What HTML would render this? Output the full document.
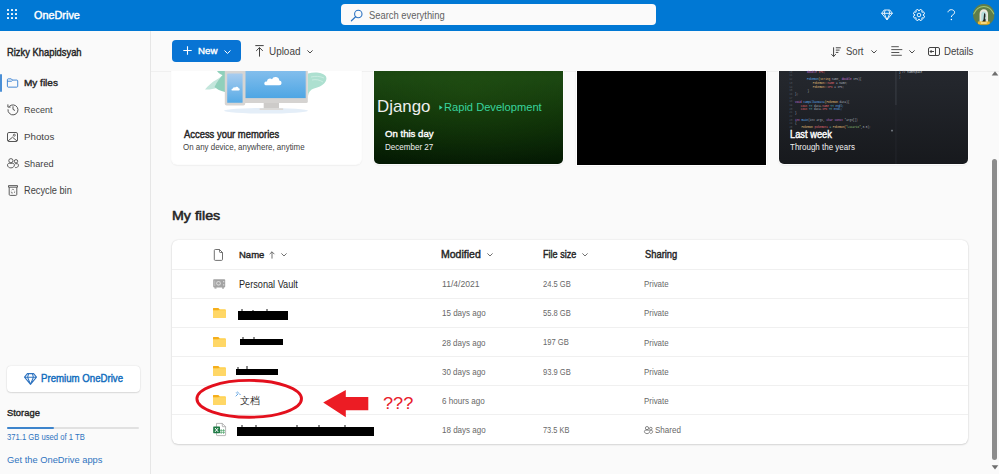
<!DOCTYPE html>
<html><head><meta charset="utf-8">
<style>
*{box-sizing:border-box;margin:0;padding:0}
html,body{width:999px;height:474px;overflow:hidden;background:#fafafa;font-family:"Liberation Sans",sans-serif;color:#242424;position:relative}
.t{position:absolute;white-space:nowrap;line-height:1;transform-origin:0 0}
.ab{position:absolute}
svg{position:absolute;overflow:visible}
#hdr{position:absolute;left:0;top:0;width:999px;height:31px;background:#0078d4}
.dot{position:absolute;width:2px;height:2px;background:#fff;border-radius:.4px}
#search{position:absolute;left:341px;top:4px;width:315px;height:21px;background:#fafafa;border-radius:4px}
#side{position:absolute;left:0;top:31px;width:151px;height:443px;background:#fafafa;border-right:1px solid #e6e6e6}
#content{position:absolute;left:151px;top:71px;width:848px;height:403px;overflow:hidden}
.card{position:absolute;border-radius:5px;overflow:hidden;box-shadow:0 0 0 1px rgba(255,255,255,.9),0 0 2px rgba(0,0,0,.14),0 1px 2px rgba(0,0,0,.12)}
.hr{position:absolute;left:0;width:796px;height:1px;background:#f0f0f0}
.bar{position:absolute;height:9px;background:#000}
</style></head><body>
<!-- header -->
<div id="hdr">
  <div class="dot" style="left:7.2px;top:9.3px"></div><div class="dot" style="left:11.2px;top:9.3px"></div><div class="dot" style="left:15.2px;top:9.3px"></div>
  <div class="dot" style="left:7.2px;top:13.3px"></div><div class="dot" style="left:11.2px;top:13.3px"></div><div class="dot" style="left:15.2px;top:13.3px"></div>
  <div class="dot" style="left:7.2px;top:17.3px"></div><div class="dot" style="left:11.2px;top:17.3px"></div><div class="dot" style="left:15.2px;top:17.3px"></div>
  <div id="search"></div>
  <!-- search icon -->
  <svg style="left:350px;top:9px" width="14" height="13" viewBox="0 0 14 13"><circle cx="8.3" cy="5" r="3.7" fill="none" stroke="#2b72c2" stroke-width="1.1"/><line x1="5.6" y1="7.7" x2="1.4" y2="11.8" stroke="#2b72c2" stroke-width="1.2" stroke-linecap="round"/></svg>
  <!-- diamond -->
  <svg style="left:881px;top:9px" width="12" height="12" viewBox="0 0 12 12"><path d="M3.2 1h5.6l2.6 3.3L6 10.8 0.6 4.3z M0.6 4.3h10.8 M4.2 1.2L3.2 4.3 6 10.8 8.8 4.3 7.8 1.2" fill="none" stroke="#fff" stroke-width=".9" stroke-linejoin="round"/></svg>
  <!-- gear -->
  <svg style="left:913.3px;top:9px" width="12" height="12" viewBox="0 0 12 12"><path d="M10.00 6.13 L11.59 7.09 L10.73 9.18 L8.92 8.73 L8.73 8.92 L9.18 10.73 L7.09 11.59 L6.13 10.00 L5.87 10.00 L4.91 11.59 L2.82 10.73 L3.27 8.92 L3.08 8.73 L1.27 9.18 L0.41 7.09 L2.00 6.13 L2.00 5.87 L0.41 4.91 L1.27 2.82 L3.08 3.27 L3.27 3.08 L2.82 1.27 L4.91 0.41 L5.87 2.00 L6.13 2.00 L7.09 0.41 L9.18 1.27 L8.73 3.08 L8.92 3.27 L10.73 2.82 L11.59 4.91 L10.00 5.87Z" fill="none" stroke="#fff" stroke-width=".9" stroke-linejoin="round"/><circle cx="6" cy="6" r="1.8" fill="none" stroke="#fff" stroke-width=".9"/></svg>
  <!-- help -->
  <svg style="left:947px;top:9px" width="9" height="12" viewBox="0 0 9 12"><path d="M1 3.3C1 1.8 2.6.7 4.3.7S7.6 1.8 7.6 3.3c0 1.6-1.3 2.2-2.3 2.9-.7.5-.9 1-.9 1.9" fill="none" stroke="#fff" stroke-width="1"/><circle cx="4.4" cy="10.6" r=".75" fill="#fff"/></svg>
  <!-- avatar -->
  <svg style="left:973px;top:3.8px" width="21.6" height="21.6" viewBox="0 0 22 22"><defs><clipPath id="av"><circle cx="11" cy="11" r="11"/></clipPath></defs><g clip-path="url(#av)"><rect width="22" height="22" fill="#5f7d49"/><path d="M.5 10.5C2 8 3 6 5 4.5 7 3 9 2.5 11 2.5s4 .5 6 2c2 1.5 3 3.5 4.5 6" fill="none" stroke="#a3c770" stroke-width="1.1"/><path d="M6.7 20V10.2C6.7 7.4 8.6 5.4 11 5.4s4.3 2 4.3 4.8V20z" fill="#ece8de"/><path d="M8.4 19.5V10.6c0-1.7 1.1-3 2.6-3s2.6 1.3 2.6 3v8.9z" fill="#b5dcdc"/><path d="M11.3 9.5c.8 0 1.3.6 1.3 1.5v2c0 .6-.3.9-.7 1.2l.9 1.4v3.4h-3.2v-1.6c.6-.4 1.2-1.2 1.2-2.3z" fill="#222"/><rect x="5" y="17.8" width="12" height="3.2" fill="#efb52f"/><rect x="8" y="18.8" width="6" height="1.1" fill="#fff3c0"/></g></svg>
</div>

<!-- sidebar -->
<div id="side"></div>
<div class="ab" style="left:0;top:73.6px;width:1.6px;height:18px;background:#4a8fd6;border-radius:1px"></div>
<!-- folder icon (my files) -->
<svg style="left:7px;top:77.8px" width="11.3" height="10" viewBox="0 0 12 10.4"><path d="M1.3 .8h3.2l1.2 1.3h4.8c.5 0 .9.4.9.9v5.7c0 .5-.4.9-.9.9H1.3C.8 9.6.4 9.2.4 8.7V1.7c0-.5.4-.9.9-.9z M.4 3.3h4.3l1.3-1.2" fill="none" stroke="#2f7bd0" stroke-width=".95" stroke-linejoin="round"/></svg>
<!-- recent icon -->
<svg style="left:7px;top:102.6px" width="12" height="12" viewBox="0 0 12 12"><path d="M2.2 3.6A5 5 0 1 1 1 6.3" fill="none" stroke="#555" stroke-width="1"/><path d="M.9 1.4v2.7h2.7" fill="none" stroke="#555" stroke-width="1"/><path d="M6 3.3v3.1l2 1.1" fill="none" stroke="#555" stroke-width="1"/></svg>
<!-- photos icon -->
<svg style="left:7px;top:132px" width="11" height="10" viewBox="0 0 11 10"><rect x=".5" y=".5" width="10" height="9" rx="1.4" fill="none" stroke="#555" stroke-width="1"/><path d="M1 9L5.5 5.2 10 9" fill="none" stroke="#555" stroke-width="1"/><circle cx="7.3" cy="3.2" r="1" fill="none" stroke="#555" stroke-width=".9"/></svg>
<!-- shared icon -->
<svg style="left:7px;top:158px" width="12" height="11" viewBox="0 0 12 11"><circle cx="3.9" cy="2.7" r="2.1" fill="none" stroke="#555" stroke-width=".95"/><circle cx="9" cy="3.3" r="1.7" fill="none" stroke="#555" stroke-width=".95"/><path d="M.5 7c0-1.1.8-1.7 1.8-1.7h3.3c1 0 1.8.6 1.8 1.7 0 1.8-1.7 2.9-3.5 2.9S.5 8.8.5 7z" fill="none" stroke="#555" stroke-width=".95"/><path d="M8.2 9.6c1.9.2 3.3-.9 3.3-2.4 0-.9-.6-1.5-1.5-1.5H8.2" fill="none" stroke="#555" stroke-width=".95"/></svg>
<!-- recycle icon -->
<svg style="left:8px;top:185px" width="10" height="11" viewBox="0 0 10 11"><path d="M.5 .6h9v1.6h-9z M1.2 2.2v7.2c0 .6.4 1 1 1h5.6c.6 0 1-.4 1-1V2.2" fill="none" stroke="#555" stroke-width=".95" stroke-linejoin="round"/><path d="M3.6 5.1l1.3-1 1.3 1 M3.2 6.6l.4 1.5 1.4-.2 M6.7 6.4l-.3 1.6" fill="none" stroke="#666" stroke-width=".7"/></svg>

<!-- premium button -->
<div class="ab" style="left:6.7px;top:365.8px;width:133px;height:26.2px;background:#fff;border-radius:4px;box-shadow:0 0 1.5px rgba(0,0,0,.16),0 1px 1.5px rgba(0,0,0,.1)"></div>
<svg style="left:23.5px;top:373px" width="13" height="12" viewBox="0 0 13 12"><path d="M3.4 .6h6.2l2.9 3.6L6.5 11.4 .5 4.2z M.5 4.2h12 M4.6 .8L3.6 4.2l2.9 7.2 2.9-7.2-1-3.4" fill="none" stroke="#2f74c0" stroke-width="1.05" stroke-linejoin="round"/></svg>
<div class="ab" style="left:7.2px;top:427.4px;width:132px;height:1.8px;background:#e1e1e1;border-radius:1px"></div>
<div class="ab" style="left:7.2px;top:427.3px;width:47.2px;height:2px;background:#3d84cc;border-radius:1px"></div>

<!-- toolbar -->
<div class="ab" style="left:172.2px;top:40px;width:69px;height:22px;background:#0874d4;border-radius:4px"></div>
<svg style="left:182.5px;top:46.4px" width="9" height="9" viewBox="0 0 9 9"><path d="M4.5 .3v8.4M.3 4.5h8.4" stroke="#fff" stroke-width="1.1"/></svg>
<svg style="left:223.5px;top:49.5px" width="7" height="4" viewBox="0 0 7 4"><path d="M.5.5l3 3 3-3" fill="none" stroke="#fff" stroke-width="1"/></svg>
<svg style="left:254.5px;top:45px" width="9" height="12" viewBox="0 0 9 12"><path d="M.3.6h8.4 M4.5 11.6V2.6 M1.2 5.9l3.3-3.3 3.3 3.3" fill="none" stroke="#424242" stroke-width="1"/></svg>
<svg style="left:306.5px;top:50px" width="6" height="4" viewBox="0 0 6 4"><path d="M.4.4l2.6 2.6L5.6.4" fill="none" stroke="#424242" stroke-width=".95"/></svg>
<!-- sort -->
<svg style="left:831px;top:46.5px" width="10" height="10" viewBox="0 0 10 10"><path d="M2.6 .3v9.2 M.4 7.2l2.2 2.3 2.2-2.3 M4.8.8h5 M4.8 3.1h3.8 M4.8 5.4h2.6" fill="none" stroke="#424242" stroke-width="1"/></svg>
<svg style="left:871px;top:50px" width="6" height="4" viewBox="0 0 6 4"><path d="M.4.4l2.6 2.6L5.6.4" fill="none" stroke="#424242" stroke-width=".95"/></svg>
<!-- view -->
<svg style="left:890.5px;top:46px" width="12" height="10" viewBox="0 0 12 10"><path d="M.3 .7h7.5 M.3 3.6h11 M.3 6.5h8 M.3 9.3h10.5" fill="none" stroke="#555" stroke-width="1"/></svg>
<svg style="left:908.5px;top:50px" width="6" height="4" viewBox="0 0 6 4"><path d="M.4.4l2.6 2.6L5.6.4" fill="none" stroke="#424242" stroke-width=".95"/></svg>
<!-- details -->
<svg style="left:928px;top:47px" width="12" height="9" viewBox="0 0 12 9"><rect x=".5" y=".5" width="11" height="8" rx="1.5" fill="none" stroke="#424242" stroke-width="1"/><path d="M7.5.5v8 M2 4.5h4 M3.6 3l-1.5 1.5 1.5 1.5" fill="none" stroke="#424242" stroke-width="1"/></svg>

<!-- content -->
<div id="content">
  <div class="ab" style="left:0;top:0;width:999px;height:1px;background:#f0f0f0"></div>
</div>
<div class="ab" style="left:151px;top:71px;width:848px;height:403px;overflow:hidden">
  <!-- card 1 -->
  <div class="card" style="left:21px;top:-40px;width:188.6px;height:132.5px;background:#fff"></div>
  <!-- card 2 -->
  <div class="card" style="left:223.3px;top:-40px;width:189.1px;height:132.7px;background:radial-gradient(ellipse 80% 60% at 50% 45%,rgba(40,90,20,.35) 0%,rgba(40,90,20,0) 100%),linear-gradient(180deg,#123a0a 0%,#1a4511 35%,#0f3208 62%,#041903 100%)"></div>
  <!-- card 3 -->
  <div class="ab" style="left:425.6px;top:-40px;width:189.2px;height:133.7px;background:#000;box-shadow:0 0 0 1px #fff,0 0 3px rgba(0,0,0,.14)"></div>
  <!-- card 4 -->
  <div class="card" style="left:628px;top:-40px;width:189px;height:132.6px;background:linear-gradient(180deg,#272a31 0%,#23262c 40%,#17191d 100%)"></div>
</div>

<!-- illustration card1 -->
<svg style="left:195px;top:71px" width="140" height="45" viewBox="0 0 140 45">
  <defs>
    <linearGradient id="scr" x1="0" y1="0" x2="0" y2="1"><stop offset="0" stop-color="#8ec3ee"/><stop offset="1" stop-color="#4ea6e4"/></linearGradient>
    <linearGradient id="ph" x1="0" y1="0" x2="0" y2="1"><stop offset="0" stop-color="#a8ccef"/><stop offset="1" stop-color="#55aae6"/></linearGradient>
    <clipPath id="c1"><rect x="-5" y="0" width="150" height="46"/></clipPath>
  </defs>
  <g clip-path="url(#c1)">
  <path d="M10 18.5C13 15 17 11 21 9 25 7 28 4 30 1V13C26 16 18 19 10 18.5z" fill="#c3e6dc"/>
  <path d="M19.5 16C22 11 25 6 30 2V21C25 20 22 18 19.5 16z" fill="#90d0bb"/>
  <path d="M22 0h8v5C27 4 24 3 22 0z" fill="#90d0bb"/>
  <path d="M113 2.5C119 .5 128 1 131 5.5 133 10 128 15.5 119 17.5 115.5 18.5 113.5 21 113 25z" fill="#ade0d0"/>
  <path d="M116 6C120 5 125 5 129 7 M117 9C121 8 125 9 128 11" fill="none" stroke="#d4efe6" stroke-width=".7"/>
  <ellipse cx="71" cy="39.8" rx="42" ry="2.8" fill="#e4eef8"/>
  <rect x="49" y="-6" width="63.8" height="38" rx="1.5" fill="#d5d3d1"/>
  <rect x="50.4" y="-6" width="60.3" height="33.1" fill="url(#scr)"/>
  <path d="M70.5 14.3h13.6a2.4 2.4 0 0 0 .2-4.8 3.8 3.8 0 0 0-7.3-1.2 3 3 0 0 0-5 2.3 1.9 1.9 0 0 0-1.5 3.7z" fill="#fff"/>
  <rect x="68.7" y="32" width="15.3" height="5.6" fill="#cdcbc9"/>
  <rect x="64.5" y="37.3" width="23.8" height="1.6" rx=".6" fill="#dcdad8"/>
  <rect x="29.8" y="-6" width="20.4" height="40.6" rx="1.8" fill="#d7d5d3"/>
  <rect x="32.2" y="2.6" width="15.4" height="29.2" rx=".6" fill="url(#ph)"/>
  <path d="M37.2 19.6h6.3a1.2 1.2 0 0 0 .1-2.4 1.9 1.9 0 0 0-3.5-.6 1.5 1.5 0 0 0-2.4 1.1.95.95 0 0 0-.5 1.9z" fill="#fff"/>
  </g>
</svg>

<!-- code editor lines card4 -->
<svg style="left:779px;top:71px" width="189" height="93" viewBox="0 0 189 93" font-family="Liberation Mono, monospace" font-size="2.75">
<g fill="#5c6370" opacity=".8">
<text x="10.2" y="1.80">10</text>
<text x="10.2" y="5.49">11</text>
<text x="10.2" y="9.18">12</text>
<text x="10.2" y="12.87">13</text>
<text x="10.2" y="16.56">14</text>
<text x="10.2" y="20.25">15</text>
<text x="10.2" y="23.94">16</text>
<text x="10.2" y="27.63">17</text>
<text x="10.2" y="31.32">18</text>
<text x="10.2" y="35.01">19</text>
<text x="10.2" y="38.70">20</text>
<text x="10.2" y="42.39">21</text>
<text x="10.2" y="46.08">22</text>
<text x="10.2" y="49.77">23</text>
<text x="10.2" y="53.46">24</text>
<text x="10.2" y="57.15">25</text>
</g>
<text x="28.00" y="1.80" xml:space="preserve"><tspan fill="#c678dd">double</tspan><tspan fill="#e06c75"> IPK;</tspan></text>
<text x="28.00" y="9.40" xml:space="preserve"><tspan fill="#61afef">Pokemon</tspan><tspan fill="#e5c07b">(string</tspan><tspan fill="#abb2bf"> name, </tspan><tspan fill="#c678dd">double</tspan><tspan fill="#abb2bf"> IPK){</tspan></text>
<text x="33.80" y="13.20" xml:space="preserve"><tspan fill="#e5c07b">Pokemon::</tspan><tspan fill="#e06c75">name</tspan><tspan fill="#abb2bf"> = name;</tspan></text>
<text x="33.80" y="16.70" xml:space="preserve"><tspan fill="#e5c07b">Pokemon::</tspan><tspan fill="#e06c75">IPK</tspan><tspan fill="#abb2bf"> = IPK;</tspan></text>
<text x="28.40" y="20.50" xml:space="preserve"><tspan fill="#abb2bf">}</tspan></text>
<text x="16.00" y="24.30" xml:space="preserve"><tspan fill="#abb2bf">};</tspan></text>
<text x="16.00" y="31.70" xml:space="preserve"><tspan fill="#c678dd">void </tspan><tspan fill="#61afef">tampilkanData</tspan><tspan fill="#e5c07b">(Pokemon</tspan><tspan fill="#abb2bf"> data){</tspan></text>
<text x="21.80" y="35.50" xml:space="preserve"><tspan fill="#e06c75">cout</tspan><tspan fill="#56b6c2"> &lt;&lt; </tspan><tspan fill="#abb2bf">data.</tspan><tspan fill="#e06c75">name</tspan><tspan fill="#56b6c2"> &lt;&lt; </tspan><tspan fill="#61afef">endl;</tspan></text>
<text x="21.80" y="38.90" xml:space="preserve"><tspan fill="#e06c75">cout</tspan><tspan fill="#56b6c2"> &lt;&lt; </tspan><tspan fill="#abb2bf">data.</tspan><tspan fill="#e06c75">IPK</tspan><tspan fill="#56b6c2"> &lt;&lt; </tspan><tspan fill="#61afef">endl;</tspan></text>
<text x="16.00" y="42.60" xml:space="preserve"><tspan fill="#abb2bf">}</tspan></text>
<text x="16.00" y="49.90" xml:space="preserve"><tspan fill="#c678dd">int </tspan><tspan fill="#61afef">main</tspan><tspan fill="#abb2bf">(int argc, </tspan><tspan fill="#c678dd">char const </tspan><tspan fill="#abb2bf">*argv[])</tspan></text>
<text x="16.00" y="53.40" xml:space="preserve"><tspan fill="#abb2bf">{</tspan></text>
<text x="22.40" y="57.00" xml:space="preserve"><tspan fill="#e5c07b">Pokemon </tspan><tspan fill="#e06c75">pokemon1</tspan><tspan fill="#56b6c2"> = </tspan><tspan fill="#e5c07b">Pokemon(</tspan><tspan fill="#98c379">&quot;Lucario&quot;</tspan><tspan fill="#abb2bf">,3.5);</tspan></text>
<text x="120" y="1.6" fill="#c8ccd2" xml:space="preserve">} // namespace</text>
<text x="120" y="7.4" fill="#7a8088">}</text>
<rect x="116.5" y="0" width=".9" height="34" fill="#3e424a"/><rect x="116.5" y="34" width=".9" height="59" fill="#24272d"/><rect x="112" y="58.8" width="2" height="1.6" fill="#6b7078"/>
</svg>

<!-- heading + table -->
<div class="ab" style="left:172px;top:240.4px;width:796px;height:203.3px;background:#fff;border-radius:6px;box-shadow:0 0 1.5px rgba(0,0,0,.16),0 1px 2px rgba(0,0,0,.12)">
  <div class="hr" style="top:28.8px"></div>
  <div class="hr" style="top:57.7px"></div>
  <div class="hr" style="top:86.7px"></div>
  <div class="hr" style="top:115.7px"></div>
  <div class="hr" style="top:144.7px"></div>
  <div class="hr" style="top:173.9px"></div>
</div>
<!-- header file icon -->
<svg style="left:214px;top:248.5px" width="9" height="12" viewBox="0 0 9 12"><path d="M1.3.5h4.2l3 3v6.9c0 .6-.4 1-1 1h-6.2c-.6 0-1-.4-1-1v-8.9c0-.6.4-1 1-1z M5.5.5v2.2c0 .5.3.8.8.8h2.2" fill="none" stroke="#616161" stroke-width=".9" stroke-linejoin="round"/></svg>
<!-- sort arrow + chevrons header -->
<svg style="left:269px;top:251px" width="6" height="8" viewBox="0 0 6 8"><path d="M3 7.6V.8 M.6 3.2L3 .8l2.4 2.4" fill="none" stroke="#616161" stroke-width=".9"/></svg>
<svg style="left:281px;top:253px" width="6" height="4" viewBox="0 0 6 4"><path d="M.4.4l2.6 2.6L5.6.4" fill="none" stroke="#616161" stroke-width=".9"/></svg>
<svg style="left:486.5px;top:253px" width="6" height="4" viewBox="0 0 6 4"><path d="M.4.4l2.6 2.6L5.6.4" fill="none" stroke="#616161" stroke-width=".9"/></svg>
<svg style="left:582px;top:253px" width="6" height="4" viewBox="0 0 6 4"><path d="M.4.4l2.6 2.6L5.6.4" fill="none" stroke="#616161" stroke-width=".9"/></svg>
<!-- vault icon -->
<svg style="left:213px;top:278.7px" width="13" height="10" viewBox="0 0 13 10"><rect x=".2" y=".2" width="12" height="8.2" rx=".8" fill="#a3a3a3"/><rect x="1.5" y="8.2" width="2" height="1.4" fill="#a3a3a3"/><rect x="9" y="8.2" width="2" height="1.4" fill="#a3a3a3"/><circle cx="5.5" cy="4.3" r="2.4" fill="#d6d6d6"/><circle cx="5.5" cy="4.3" r="1.2" fill="#a3a3a3"/><rect x="10" y="2" width="1.3" height="1.3" fill="#d6d6d6"/><rect x="10" y="5.2" width="1.3" height="1.3" fill="#d6d6d6"/><rect x="1.3" y="1.6" width="1" height="5.4" fill="#c4c4c4"/></svg>
<!-- folders -->
<svg style="left:212.9px;top:307.9px" width="13" height="10" viewBox="0 0 13 10.5" preserveAspectRatio="none"><path d="M.8 0h4.2l1.7 1.3H12c.5 0 .9.4.9.9v7.4c0 .5-.4.9-.9.9H.9c-.5 0-.9-.4-.9-.9V.8C0 .4.4 0 .8 0z" fill="#ffcf4a"/><path d="M.8 0h4.2l1.7 1.3-1.7 1.4H0V.8C0 .4.4 0 .8 0z" fill="#f5ae1b"/><path d="M0 2.7h12.9v7c0 .5-.4.9-.9.9H.9c-.5 0-.9-.4-.9-.9z" fill="#ffd766"/></svg>
<svg style="left:212.9px;top:337px" width="13" height="10" viewBox="0 0 13 10.5" preserveAspectRatio="none"><path d="M.8 0h4.2l1.7 1.3H12c.5 0 .9.4.9.9v7.4c0 .5-.4.9-.9.9H.9c-.5 0-.9-.4-.9-.9V.8C0 .4.4 0 .8 0z" fill="#ffcf4a"/><path d="M.8 0h4.2l1.7 1.3-1.7 1.4H0V.8C0 .4.4 0 .8 0z" fill="#f5ae1b"/><path d="M0 2.7h12.9v7c0 .5-.4.9-.9.9H.9c-.5 0-.9-.4-.9-.9z" fill="#ffd766"/></svg>
<svg style="left:212.9px;top:366px" width="13" height="10" viewBox="0 0 13 10.5" preserveAspectRatio="none"><path d="M.8 0h4.2l1.7 1.3H12c.5 0 .9.4.9.9v7.4c0 .5-.4.9-.9.9H.9c-.5 0-.9-.4-.9-.9V.8C0 .4.4 0 .8 0z" fill="#ffcf4a"/><path d="M.8 0h4.2l1.7 1.3-1.7 1.4H0V.8C0 .4.4 0 .8 0z" fill="#f5ae1b"/><path d="M0 2.7h12.9v7c0 .5-.4.9-.9.9H.9c-.5 0-.9-.4-.9-.9z" fill="#ffd766"/></svg>
<svg style="left:212.9px;top:394.8px" width="13" height="10" viewBox="0 0 13 10.5" preserveAspectRatio="none"><path d="M.8 0h4.2l1.7 1.3H12c.5 0 .9.4.9.9v7.4c0 .5-.4.9-.9.9H.9c-.5 0-.9-.4-.9-.9V.8C0 .4.4 0 .8 0z" fill="#ffcf4a"/><path d="M.8 0h4.2l1.7 1.3-1.7 1.4H0V.8C0 .4.4 0 .8 0z" fill="#f5ae1b"/><path d="M0 2.7h12.9v7c0 .5-.4.9-.9.9H.9c-.5 0-.9-.4-.9-.9z" fill="#ffd766"/></svg>
<!-- excel -->
<svg style="left:212.9px;top:422.7px" width="13" height="13" viewBox="0 0 13 13"><path d="M3.5.4h5.8l3.3 3.3v8.3c0 .4-.3.6-.6.6H4.1c-.4 0-.6-.3-.6-.6z" fill="#fff" stroke="#9a9a9a" stroke-width=".7"/><path d="M9.3.4v2.7c0 .4.3.6.6.6h2.7" fill="none" stroke="#9a9a9a" stroke-width=".7"/><path d="M8.2 6v5 M10.6 6v5 M7 7.6h5 M7 9.4h5" stroke="#3a9a5a" stroke-width=".6"/><rect x=".2" y="3.4" width="6.8" height="6.8" rx=".6" fill="#1f7a45"/><path d="M2 5l3.2 3.9M5.2 5L2 8.9" stroke="#fff" stroke-width="1"/></svg>
<!-- sync sparkle -->
<svg style="left:235px;top:391px" width="6" height="6" viewBox="0 0 6 6"><path d="M.7 5.3L3.4 2.6 M2.5.6L3.3 2 M4.2 3L5.6 3.5 M1.2 1.4l.9 1.3" fill="none" stroke="#3d8fdc" stroke-width=".8"/></svg>
<!-- shared icon small -->
<svg style="left:644px;top:426px" width="9" height="8.5" viewBox="0 0 9 8.5"><circle cx="3" cy="2.1" r="1.6" fill="none" stroke="#616161" stroke-width=".75"/><circle cx="6.8" cy="2.6" r="1.3" fill="none" stroke="#616161" stroke-width=".75"/><path d="M.4 5.4c0-.8.6-1.3 1.4-1.3h2.5c.8 0 1.4.5 1.4 1.3 0 1.4-1.3 2.2-2.7 2.2S.4 6.8.4 5.4z" fill="none" stroke="#616161" stroke-width=".75"/><path d="M6.2 7.4c1.4.1 2.5-.7 2.5-1.8 0-.7-.5-1.2-1.2-1.2H6.2" fill="none" stroke="#616161" stroke-width=".75"/></svg>

<!-- redaction bars -->
<div class="ab" style="left:241px;top:308.8px;width:2px;height:2.5px;background:#8a8a8a"></div>
<div class="ab" style="left:252px;top:309.5px;width:1.5px;height:2px;background:#8a8a8a"></div>
<div class="ab" style="left:266px;top:309px;width:1.5px;height:2px;background:#8a8a8a"></div>
<div class="bar" style="left:238.4px;top:311px;width:49.6px;height:8.9px"></div>
<div class="ab" style="left:242px;top:337px;width:2px;height:2px;background:#8a8a8a"></div>
<div class="ab" style="left:253px;top:336.5px;width:1.5px;height:2.5px;background:#8a8a8a"></div>
<div class="bar" style="left:239.6px;top:338.8px;width:43px;height:6.4px"></div>
<div class="ab" style="left:237px;top:366.5px;width:2px;height:2.5px;background:#8a8a8a"></div>
<div class="ab" style="left:246px;top:366px;width:1.5px;height:3px;background:#8a8a8a"></div>
<div class="bar" style="left:236.2px;top:368.8px;width:42.2px;height:6px"></div>
<div class="ab" style="left:241px;top:425px;width:2px;height:2.5px;background:#8a8a8a"></div>
<div class="ab" style="left:255px;top:424.5px;width:1.5px;height:3px;background:#8a8a8a"></div>
<div class="ab" style="left:296px;top:424.5px;width:1.5px;height:3px;background:#8a8a8a"></div>
<div class="ab" style="left:318px;top:424.5px;width:1.5px;height:3px;background:#8a8a8a"></div>
<div class="ab" style="left:344px;top:424.5px;width:1.5px;height:3px;background:#8a8a8a"></div>
<div class="bar" style="left:236.9px;top:427.4px;width:137.1px;height:8.6px"></div>

<svg style="left:438.5px;top:105px" width="4" height="5" viewBox="0 0 4 5"><path d="M.3.3L3.6 2.5.3 4.7z" fill="#38d49e"/></svg>
<!-- 文档 -->
<div class="t" style="left:239.6px;top:395.5px;font-size:10px;color:#303030;letter-spacing:.1px">文档</div>

<!-- annotation -->
<svg style="left:194px;top:378px" width="112" height="43" viewBox="0 0 112 43"><ellipse cx="55.2" cy="20.8" rx="52.3" ry="18.4" fill="none" stroke="#e3101d" stroke-width="2.9"/></svg>
<svg style="left:322px;top:389px" width="48" height="28" viewBox="0 0 48 28"><path d="M1.2 13.4L23.8 1v7h22.5v13.2H23.8v7z" fill="#ec1c24"/></svg>

<!-- scrollbar -->
<svg style="left:991px;top:71px" width="8" height="5" viewBox="0 0 8 5"><path d="M.7 4.4L4 .3l3.3 4.1z" fill="#6e6e6e"/></svg>
<div class="ab" style="left:992px;top:159px;width:5.4px;height:301px;background:#8c8c8c;border-radius:3px"></div>
<svg style="left:991px;top:464.8px" width="8" height="5" viewBox="0 0 8 5"><path d="M.7.3L4 4.6 7.3.3z" fill="#6e6e6e"/></svg>

<div class="t" style="left:34.26px;top:10.47px;font-size:10.770px;font-weight:normal;-webkit-text-stroke:0.431px #ffffff;color:#ffffff;transform:scaleX(1.0083);">OneDrive</div>
<div class="t" style="left:369.27px;top:10.90px;font-size:10.494px;font-weight:normal;color:#616161;transform:scaleX(0.8949);">Search everything</div>
<div class="t" style="left:6.74px;top:48.20px;font-size:10.218px;font-weight:normal;-webkit-text-stroke:0.409px #242424;color:#242424;transform:scaleX(0.9196);">Rizky Khapidsyah</div>
<div class="t" style="left:24.29px;top:78.27px;font-size:9.390px;font-weight:normal;-webkit-text-stroke:0.376px #242424;color:#242424;transform:scaleX(1.0671);">My files</div>
<div class="t" style="left:24.15px;top:105.14px;font-size:9.804px;font-weight:normal;color:#424242;transform:scaleX(0.9178);">Recent</div>
<div class="t" style="left:23.80px;top:132.27px;font-size:9.942px;font-weight:normal;color:#424242;transform:scaleX(0.9791);">Photos</div>
<div class="t" style="left:24.06px;top:159.17px;font-size:9.942px;font-weight:normal;color:#424242;transform:scaleX(0.9231);">Shared</div>
<div class="t" style="left:23.85px;top:186.36px;font-size:10.080px;font-weight:normal;color:#424242;transform:scaleX(0.9169);">Recycle bin</div>
<div class="t" style="left:40.73px;top:374.20px;font-size:10.218px;font-weight:normal;-webkit-text-stroke:0.409px #0f6cbd;color:#0f6cbd;transform:scaleX(0.9456);">Premium OneDrive</div>
<div class="t" style="left:6.98px;top:407.58px;font-size:9.942px;font-weight:normal;-webkit-text-stroke:0.398px #242424;color:#242424;transform:scaleX(0.9437);">Storage</div>
<div class="t" style="left:6.98px;top:433.99px;font-size:8.285px;font-weight:normal;color:#2f74c0;transform:scaleX(0.9270);">371.1 GB used of 1 TB</div>
<div class="t" style="left:6.75px;top:454.98px;font-size:9.942px;font-weight:normal;color:#2f74c0;transform:scaleX(0.9394);">Get the OneDrive apps</div>
<div class="t" style="left:197.80px;top:47.20px;font-size:9.251px;font-weight:normal;-webkit-text-stroke:0.370px #ffffff;color:#ffffff;transform:scaleX(1.0499);">New</div>
<div class="t" style="left:269.19px;top:46.70px;font-size:10.465px;font-weight:normal;color:#424242;transform:scaleX(0.9480);">Upload</div>
<div class="t" style="left:846.48px;top:46.26px;font-size:10.632px;font-weight:normal;color:#424242;transform:scaleX(0.8947);">Sort</div>
<div class="t" style="left:944.14px;top:46.24px;font-size:10.632px;font-weight:normal;color:#424242;transform:scaleX(0.9064);">Details</div>
<div class="t" style="left:183.51px;top:129.47px;font-size:10.908px;font-weight:normal;-webkit-text-stroke:0.436px #242424;color:#242424;transform:scaleX(0.8639);">Access your memories</div>
<div class="t" style="left:182.89px;top:143.10px;font-size:9.113px;font-weight:normal;color:#424242;transform:scaleX(0.8702);">On any device, anywhere, anytime</div>
<div class="t" style="left:377.14px;top:98.75px;font-size:16.744px;font-weight:normal;color:#eeeeee;transform:scaleX(1.0083);">Django</div>
<div class="t" style="left:443.65px;top:102.03px;font-size:11.185px;font-weight:normal;color:#38d49e;transform:scaleX(0.9955);">Rapid Development</div>
<div class="t" style="left:385.16px;top:128.88px;font-size:9.666px;font-weight:normal;-webkit-text-stroke:0.387px #ffffff;color:#ffffff;transform:scaleX(0.9934);">On this day</div>
<div class="t" style="left:384.74px;top:143.46px;font-size:8.699px;font-weight:normal;color:#f0f0f0;transform:scaleX(0.9263);">December 27</div>
<div class="t" style="left:790.34px;top:129.90px;font-size:10.080px;font-weight:normal;-webkit-text-stroke:0.403px #ffffff;color:#ffffff;transform:scaleX(0.9241);">Last week</div>
<div class="t" style="left:790.30px;top:142.17px;font-size:9.666px;font-weight:normal;color:#f0f0f0;transform:scaleX(0.8280);">Through the years</div>
<div class="t" style="left:171.95px;top:208.96px;font-size:13.532px;font-weight:normal;-webkit-text-stroke:0.541px #242424;color:#242424;transform:scaleX(1.0515);">My files</div>
<div class="t" style="left:239.33px;top:250.44px;font-size:9.666px;font-weight:normal;-webkit-text-stroke:0.387px #242424;color:#242424;transform:scaleX(0.9851);">Name</div>
<div class="t" style="left:441.49px;top:250.04px;font-size:10.494px;font-weight:normal;-webkit-text-stroke:0.420px #242424;color:#242424;transform:scaleX(1.0032);">Modified</div>
<div class="t" style="left:542.88px;top:250.04px;font-size:10.494px;font-weight:normal;-webkit-text-stroke:0.420px #242424;color:#242424;transform:scaleX(0.8661);">File size</div>
<div class="t" style="left:644.69px;top:250.04px;font-size:10.494px;font-weight:normal;-webkit-text-stroke:0.420px #242424;color:#242424;transform:scaleX(0.8930);">Sharing</div>
<div class="t" style="left:238.97px;top:280.00px;font-size:10.494px;font-weight:normal;color:#242424;transform:scaleX(0.8722);">Personal Vault</div>
<div class="t" style="left:383.15px;top:394.86px;font-size:17.398px;font-weight:normal;color:#e8202a;transform:scaleX(1.0472);">???</div>
<div class="t" style="left:441.55px;top:279.24px;font-size:9.390px;font-weight:normal;color:#686868;transform:scaleX(0.9173);">11/4/2021</div>
<div class="t" style="left:543.12px;top:279.00px;font-size:9.390px;font-weight:normal;color:#686868;transform:scaleX(0.8063);">24.5 GB</div>
<div class="t" style="left:644.40px;top:279.24px;font-size:9.390px;font-weight:normal;color:#686868;transform:scaleX(0.8421);">Private</div>
<div class="t" style="left:441.59px;top:308.44px;font-size:9.390px;font-weight:normal;color:#686868;transform:scaleX(0.8561);">15 days ago</div>
<div class="t" style="left:543.12px;top:308.20px;font-size:9.390px;font-weight:normal;color:#686868;transform:scaleX(0.8063);">55.8 GB</div>
<div class="t" style="left:644.40px;top:308.44px;font-size:9.390px;font-weight:normal;color:#686868;transform:scaleX(0.8421);">Private</div>
<div class="t" style="left:441.80px;top:337.64px;font-size:9.390px;font-weight:normal;color:#686868;transform:scaleX(0.8520);">28 days ago</div>
<div class="t" style="left:542.92px;top:337.40px;font-size:9.390px;font-weight:normal;color:#686868;transform:scaleX(0.8127);">197 GB</div>
<div class="t" style="left:644.40px;top:337.64px;font-size:9.390px;font-weight:normal;color:#686868;transform:scaleX(0.8421);">Private</div>
<div class="t" style="left:441.80px;top:366.84px;font-size:9.390px;font-weight:normal;color:#686868;transform:scaleX(0.8520);">30 days ago</div>
<div class="t" style="left:543.12px;top:366.60px;font-size:9.390px;font-weight:normal;color:#686868;transform:scaleX(0.8063);">93.9 GB</div>
<div class="t" style="left:644.40px;top:366.84px;font-size:9.390px;font-weight:normal;color:#686868;transform:scaleX(0.8421);">Private</div>
<div class="t" style="left:441.79px;top:396.04px;font-size:9.390px;font-weight:normal;color:#686868;transform:scaleX(0.8626);">6 hours ago</div>
<div class="t" style="left:644.40px;top:396.04px;font-size:9.390px;font-weight:normal;color:#686868;transform:scaleX(0.8421);">Private</div>
<div class="t" style="left:441.59px;top:425.24px;font-size:9.390px;font-weight:normal;color:#686868;transform:scaleX(0.8561);">18 days ago</div>
<div class="t" style="left:543.12px;top:425.00px;font-size:9.390px;font-weight:normal;color:#686868;transform:scaleX(0.7899);">73.5 KB</div>
<div class="t" style="left:654.59px;top:425.24px;font-size:9.390px;font-weight:normal;color:#686868;transform:scaleX(0.8558);">Shared</div>

</body></html>
